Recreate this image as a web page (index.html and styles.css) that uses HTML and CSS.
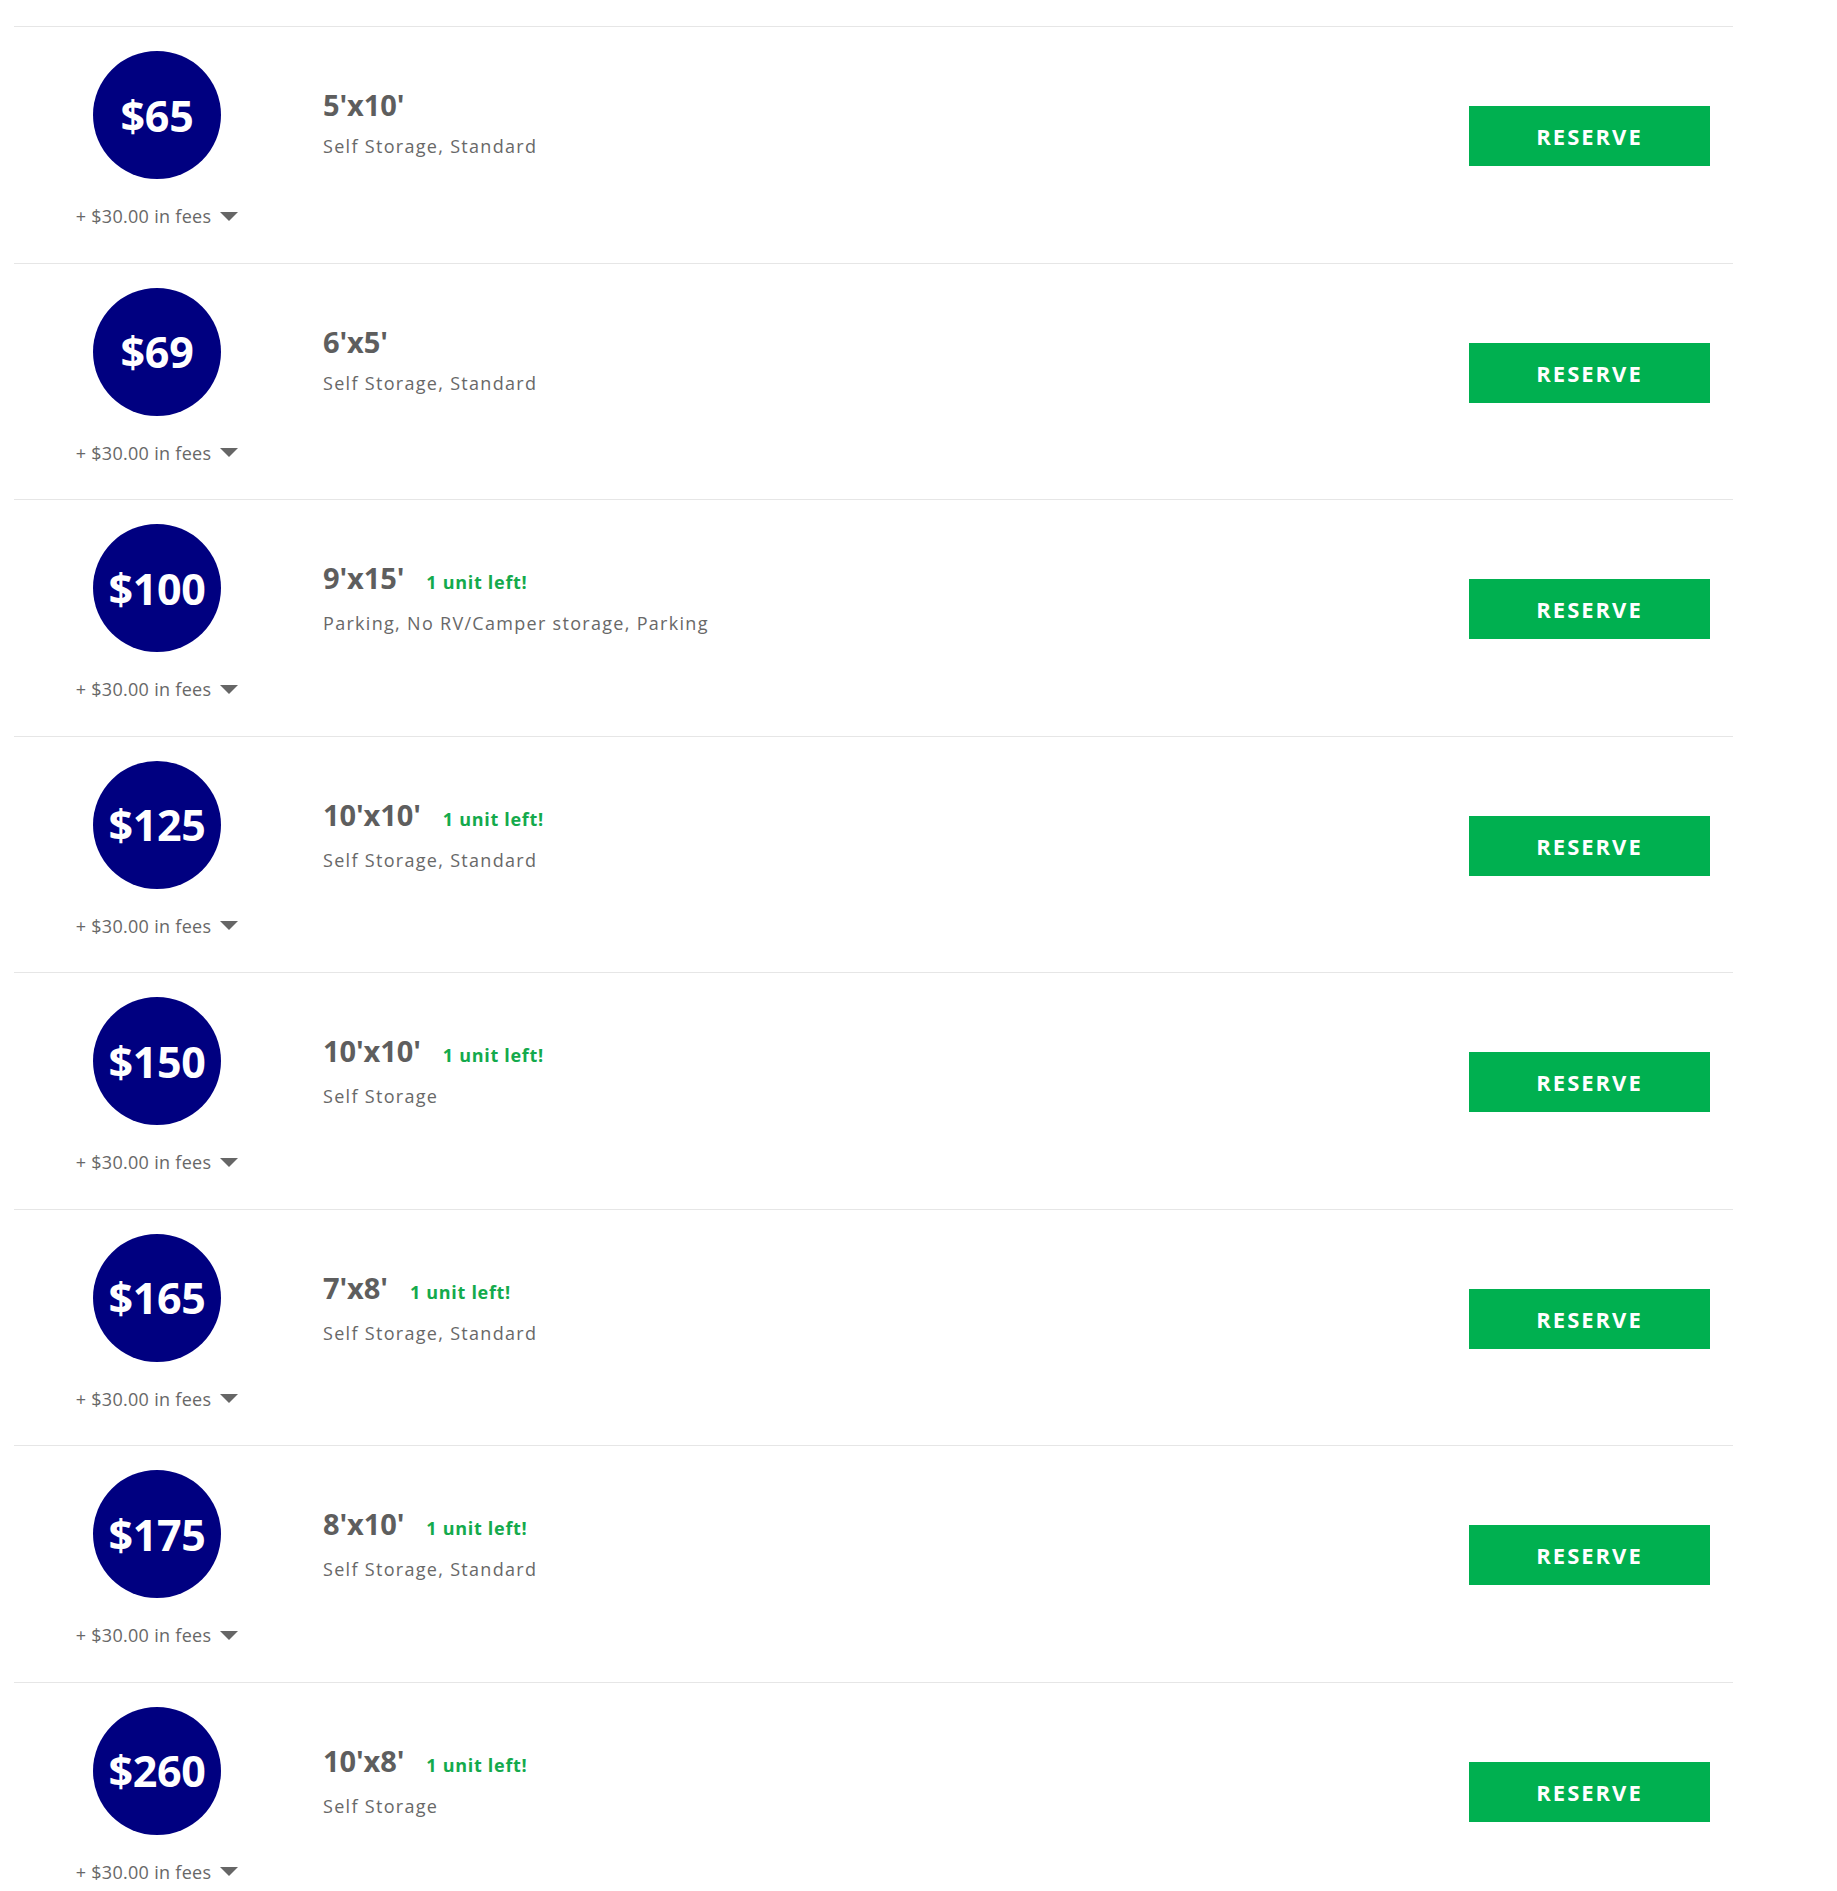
FILE: index.html
```html
<!DOCTYPE html>
<html lang="en">
<head>
  <meta charset="UTF-8">
  <meta name="viewport" content="width=device-width, initial-scale=1.0">
  <title>Available Units</title>
  <link rel="stylesheet" href="styles.css">
</head>
<body>
  <div class="unit-list">

    <div class="unit-row">
      <div class="price-col">
        <div class="price-circle">$65</div>
        <div class="fees">+ $30.00 in fees <span class="caret"></span></div>
      </div>
      <div class="unit-info">
        <div class="unit-title"><span class="unit-size">5'x10'</span></div>
        <div class="unit-desc">Self Storage, Standard</div>
      </div>
      <button class="reserve-btn">Reserve</button>
    </div>

    <div class="unit-row">
      <div class="price-col">
        <div class="price-circle">$69</div>
        <div class="fees">+ $30.00 in fees <span class="caret"></span></div>
      </div>
      <div class="unit-info">
        <div class="unit-title"><span class="unit-size">6'x5'</span></div>
        <div class="unit-desc">Self Storage, Standard</div>
      </div>
      <button class="reserve-btn">Reserve</button>
    </div>

    <div class="unit-row">
      <div class="price-col">
        <div class="price-circle">$100</div>
        <div class="fees">+ $30.00 in fees <span class="caret"></span></div>
      </div>
      <div class="unit-info">
        <div class="unit-title"><span class="unit-size">9'x15'</span><span class="units-left">1 unit left!</span></div>
        <div class="unit-desc">Parking, No RV/Camper storage, Parking</div>
      </div>
      <button class="reserve-btn">Reserve</button>
    </div>

    <div class="unit-row">
      <div class="price-col">
        <div class="price-circle">$125</div>
        <div class="fees">+ $30.00 in fees <span class="caret"></span></div>
      </div>
      <div class="unit-info">
        <div class="unit-title"><span class="unit-size">10'x10'</span><span class="units-left">1 unit left!</span></div>
        <div class="unit-desc">Self Storage, Standard</div>
      </div>
      <button class="reserve-btn">Reserve</button>
    </div>

    <div class="unit-row">
      <div class="price-col">
        <div class="price-circle">$150</div>
        <div class="fees">+ $30.00 in fees <span class="caret"></span></div>
      </div>
      <div class="unit-info">
        <div class="unit-title"><span class="unit-size">10'x10'</span><span class="units-left">1 unit left!</span></div>
        <div class="unit-desc">Self Storage</div>
      </div>
      <button class="reserve-btn">Reserve</button>
    </div>

    <div class="unit-row">
      <div class="price-col">
        <div class="price-circle">$165</div>
        <div class="fees">+ $30.00 in fees <span class="caret"></span></div>
      </div>
      <div class="unit-info">
        <div class="unit-title"><span class="unit-size">7'x8'</span><span class="units-left">1 unit left!</span></div>
        <div class="unit-desc">Self Storage, Standard</div>
      </div>
      <button class="reserve-btn">Reserve</button>
    </div>

    <div class="unit-row">
      <div class="price-col">
        <div class="price-circle">$175</div>
        <div class="fees">+ $30.00 in fees <span class="caret"></span></div>
      </div>
      <div class="unit-info">
        <div class="unit-title"><span class="unit-size">8'x10'</span><span class="units-left">1 unit left!</span></div>
        <div class="unit-desc">Self Storage, Standard</div>
      </div>
      <button class="reserve-btn">Reserve</button>
    </div>

    <div class="unit-row">
      <div class="price-col">
        <div class="price-circle">$260</div>
        <div class="fees">+ $30.00 in fees <span class="caret"></span></div>
      </div>
      <div class="unit-info">
        <div class="unit-title"><span class="unit-size">10'x8'</span><span class="units-left">1 unit left!</span></div>
        <div class="unit-desc">Self Storage</div>
      </div>
      <button class="reserve-btn">Reserve</button>
    </div>

  </div>
</body>
</html>
```

FILE: styles.css
```css
:root {
  --navy: #000080;
  --green: #00b050;
  --green-text: #14aa4c;
  --text-dark: #5e5e5e;
  --text-light: #686868;
  --line: #e6e6e6;
}

* {
  box-sizing: border-box;
}

body {
  margin: 0;
  background: #fff;
  font-family: 'Open Sans', 'Liberation Sans', sans-serif;
  color: var(--text-dark);
}

.unit-list {
  padding: 26px 104px 0 14px;
}

.unit-row {
  display: grid;
  grid-template-columns: 286px 1fr auto;
  column-gap: 23px;
  height: 236.5px;
  padding: 24px 23px 0 0;
  border-top: 1px solid var(--line);
}

.price-col {
  display: flex;
  flex-direction: column;
  align-items: center;
}

.price-circle {
  width: 128px;
  height: 128px;
  border-radius: 50%;
  background: var(--navy);
  color: #fff;
  font-size: 43px;
  font-weight: 700;
  letter-spacing: -0.3px;
  display: flex;
  align-items: center;
  justify-content: center;
}

.fees {
  margin-top: 25px;
  font-size: 18px;
  line-height: 24px;
  letter-spacing: 0.3px;
  color: var(--text-light);
  display: flex;
  align-items: center;
}

.caret {
  display: inline-block;
  margin-left: 9px;
  width: 0;
  height: 0;
  border-left: 9px solid transparent;
  border-right: 9px solid transparent;
  border-top: 9px solid #666;
}

.unit-info {
  padding-top: 37px;
}

.unit-title {
  display: flex;
  align-items: baseline;
  line-height: 34px;
}

.unit-size {
  font-size: 29px;
  font-weight: 700;
  color: var(--text-dark);
  letter-spacing: -0.1px;
}

.units-left {
  margin-left: 22px;
  font-size: 18px;
  font-weight: 700;
  color: var(--green-text);
  letter-spacing: 0.7px;
}

.unit-desc {
  margin-top: 12px;
  font-size: 18px;
  line-height: 24px;
  color: var(--text-light);
  letter-spacing: 1.3px;
}

.reserve-btn {
  align-self: start;
  margin-top: 55px;
  width: 241px;
  height: 60px;
  border: none;
  background: var(--green);
  color: #fff;
  font-family: inherit;
  font-size: 22px;
  font-weight: 700;
  letter-spacing: 2px;
  text-transform: uppercase;
  cursor: pointer;
}
```
